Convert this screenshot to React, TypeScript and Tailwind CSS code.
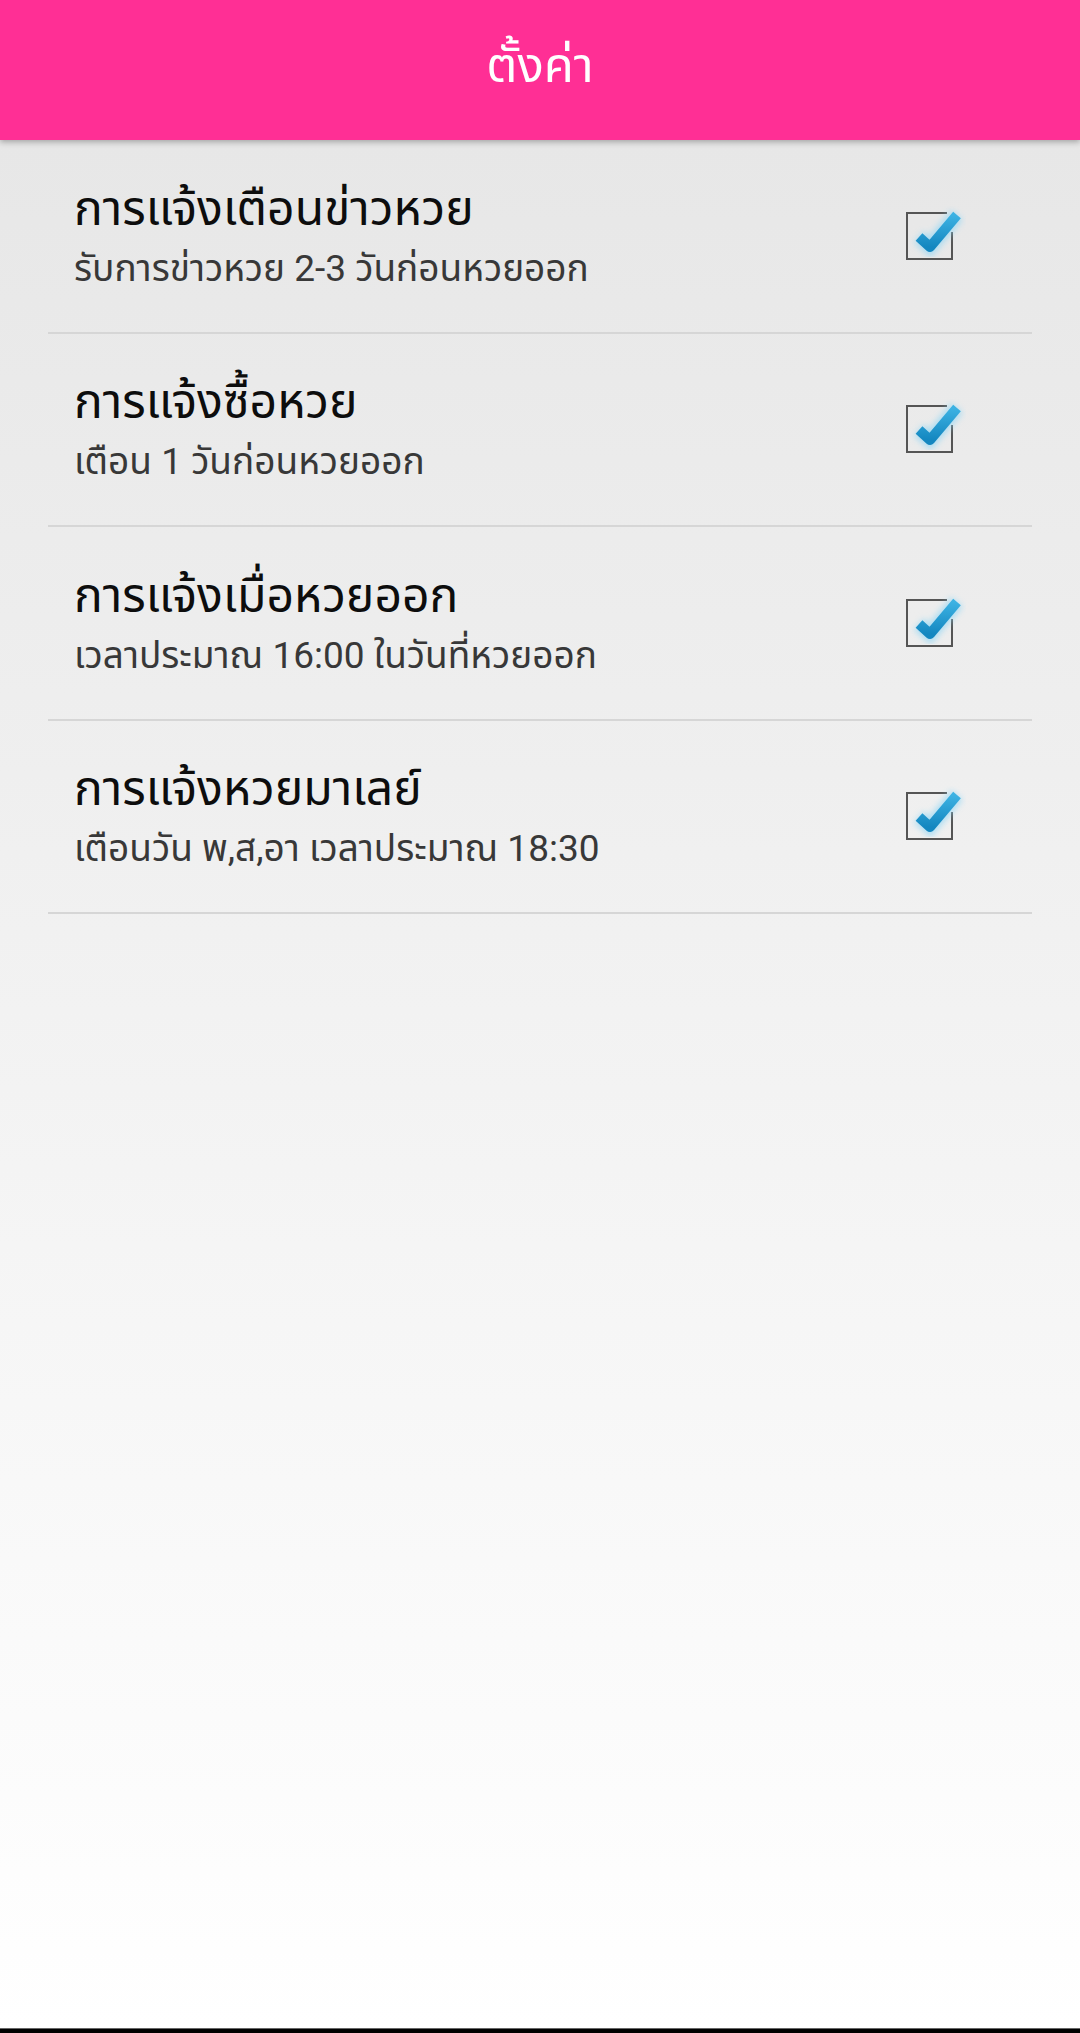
import React from "react";

type Setting = {
  title: string;
  detail: string;
};

const settings: Setting[] = [
  { title: "การแจ้งเตือนข่าวหวย", detail: "รับการข่าวหวย 2-3 วันก่อนหวยออก" },
  { title: "การแจ้งซื้อหวย", detail: "เตือน 1 วันก่อนหวยออก" },
  { title: "การแจ้งเมื่อหวยออก", detail: "เวลาประมาณ 16:00 ในวันที่หวยออก" },
  { title: "การแจ้งหวยมาเลย์", detail: "เตือนวัน พ,ส,อา เวลาประมาณ 18:30" },
];

function CheckIcon() {
  return (
    <svg width="64" height="60" viewBox="0 0 64 60" className="shrink-0">
      <defs>
        <filter id="glow" x="-30%" y="-30%" width="160%" height="160%">
          <feGaussianBlur stdDeviation="3" />
        </filter>
        <linearGradient id="tick" x1="0" y1="0" x2="0" y2="1">
          <stop offset="0" stopColor="#3cb2e3" />
          <stop offset="1" stopColor="#1487c0" />
        </linearGradient>
      </defs>
      <path d="M45 7H5V53H50V26" fill="none" stroke="#555" strokeWidth="2" />
      <path
        d="M17 31L28 41L55 9"
        fill="none"
        stroke="#8fd6f5"
        strokeWidth="15"
        opacity="0.7"
        filter="url(#glow)"
      />
      <path
        d="M17 31L28 41L55 9"
        fill="none"
        stroke="url(#tick)"
        strokeWidth="10"
        strokeLinejoin="round"
      />
    </svg>
  );
}

export default function App() {
  return (
    <div
      className="h-[2033px] w-[1080px] flex flex-col overflow-hidden"
      style={{ fontFamily: 'Roboto, "Noto Sans", "Noto Sans Thai", sans-serif' }}
    >
      <header className="relative z-10 h-[140px] shrink-0 bg-[#ff2f95] flex items-center justify-center shadow-[0_2px_6px_rgba(0,0,0,0.3)]">
        <h1 className="text-white text-[49px] leading-none pb-[10px]">ตั้งค่า</h1>
      </header>
      <main className="flex-1 bg-gradient-to-b from-[#e7e7e7] to-[#ffffff]">
        <ul className="mx-[48px]">
          {settings.map((s) => (
            <li
              key={s.title}
              className="h-[193.5px] border-b-2 border-[#d6d6d6] flex items-center justify-between pl-[26px] pr-[66px]"
            >
              <div className="flex flex-col gap-[10px]">
                <span className="text-[48px] leading-[56px] text-[#0d0d0d]">{s.title}</span>
                <span className="text-[37px] leading-[44px] text-[#383838]">{s.detail}</span>
              </div>
              <CheckIcon />
            </li>
          ))}
        </ul>
      </main>
      <div className="h-[5px] shrink-0 bg-black border-t border-[#666]" />
    </div>
  );
}
